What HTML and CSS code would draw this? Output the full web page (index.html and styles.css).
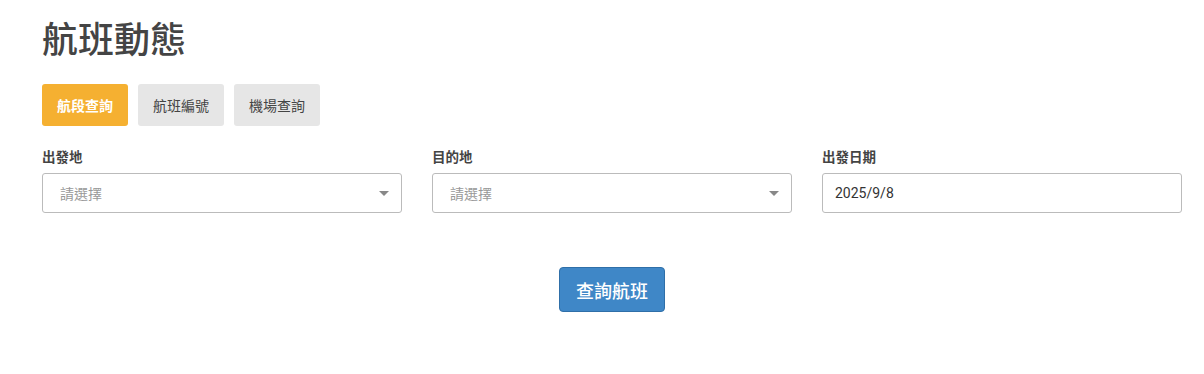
FILE: index.html
```html
<!DOCTYPE html>
<html lang="zh-Hant">
<head>
    <meta charset="UTF-8">
    <meta name="viewport" content="width=device-width, initial-scale=1.0">
    <title>航班動態</title>
    <link rel="stylesheet" href="styles.css">
</head>
<body>
    <div class="container">
        <h1>航班動態</h1>
        <div class="tabs">
            <button class="tab active">航段查詢</button>
            <button class="tab">航班編號</button>
            <button class="tab">機場查詢</button>
        </div>
        <div class="fields">
            <div class="field">
                <label>出發地</label>
                <div class="select">
                    <span class="placeholder">請選擇</span>
                    <span class="arrow"></span>
                </div>
            </div>
            <div class="field">
                <label>目的地</label>
                <div class="select">
                    <span class="placeholder">請選擇</span>
                    <span class="arrow"></span>
                </div>
            </div>
            <div class="field">
                <label>出發日期</label>
                <input class="date" type="text" value="2025/9/8">
            </div>
        </div>
        <div class="actions">
            <button class="search">查詢航班</button>
        </div>
    </div>
</body>
</html>
```

FILE: styles.css
```css
body {
    font-family: Roboto, "Liberation Sans", "Noto Sans CJK TC", sans-serif;
    margin: 0;
    background-color: #fff;
    color: #333;
}
.container {
    width: 1140px;
    padding: 0 42px;
}
h1 {
    font-size: 36px;
    font-weight: 500;
    color: #444;
    margin: 0;
    padding-top: 18px;
    line-height: 46px;
}
.tabs {
    display: flex;
    gap: 10px;
    margin-top: 20px;
}
.tab {
    font-family: inherit;
    font-size: 14px;
    height: 42px;
    width: 86px;
    border: none;
    border-radius: 3px;
    background-color: #e6e6e6;
    color: #444;
    cursor: pointer;
}
.tab.active {
    background-color: #f5b031;
    color: #fff;
    font-weight: bold;
}
.fields {
    display: flex;
    gap: 30px;
    margin-top: 20px;
}
.field {
    flex: 1;
}
.field label {
    display: block;
    font-size: 13.5px;
    font-weight: bold;
    color: #444;
    line-height: 22px;
    margin-bottom: 5px;
}
.select {
    height: 40px;
    box-sizing: border-box;
    border: 1px solid #bbb;
    border-radius: 3px;
    display: flex;
    align-items: center;
    justify-content: space-between;
    padding: 0 12px 0 17px;
}
.placeholder {
    font-size: 14px;
    color: #999;
}
.arrow {
    width: 0;
    height: 0;
    border-left: 5px solid transparent;
    border-right: 5px solid transparent;
    border-top: 5px solid #888;
}
.date {
    display: block;
    width: 100%;
    height: 40px;
    box-sizing: border-box;
    border: 1px solid #bbb;
    border-radius: 3px;
    padding: 0 12px;
    font-family: inherit;
    font-size: 14px;
    color: #333;
}
.actions {
    display: flex;
    justify-content: center;
    margin-top: 54px;
}
.search {
    font-family: inherit;
    font-size: 18px;
    font-weight: 500;
    color: #fff;
    background-color: #3f87c7;
    border: 1px solid #2f6fa8;
    border-radius: 4px;
    width: 106px;
    height: 45px;
    cursor: pointer;
}
```
